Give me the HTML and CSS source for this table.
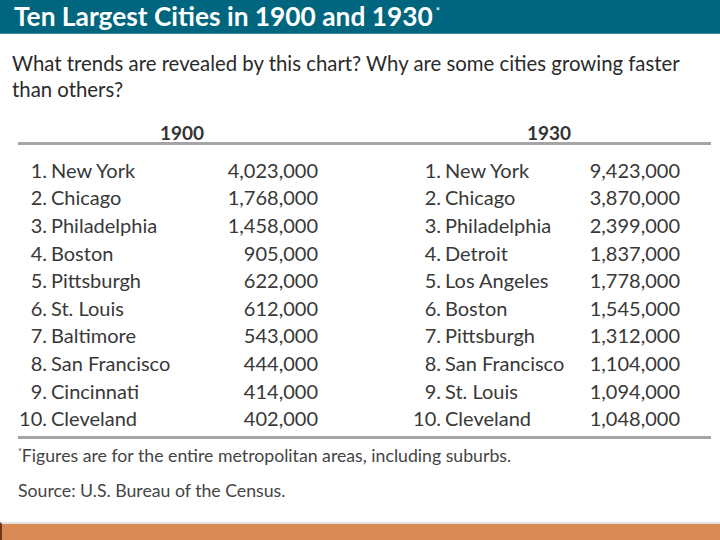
FILE: index.html
```html
<!DOCTYPE html>
<html>
<head>
<meta charset="utf-8">
<link rel="stylesheet" href="styles.css">
</head>
<body>
<div class="page">
  <header class="banner">
    <h1 class="title">Ten Largest Cities in 1900 and 1930<sup>*</sup></h1>
  </header>
  <p class="question">What trends are revealed by this chart? Why are some cities growing faster than others?</p>
  <section class="chart">
    <div class="years">
      <div class="year year-left">1900</div>
      <div class="year year-right">1930</div>
    </div>
    <div class="rule"></div>
    <div class="cols">
      <div class="block block-left">
        <span class="rank">1.</span><span class="city">New York</span><span class="pop">4,023,000</span>
        <span class="rank">2.</span><span class="city">Chicago</span><span class="pop">1,768,000</span>
        <span class="rank">3.</span><span class="city">Philadelphia</span><span class="pop">1,458,000</span>
        <span class="rank">4.</span><span class="city">Boston</span><span class="pop">905,000</span>
        <span class="rank">5.</span><span class="city">Pittsburgh</span><span class="pop">622,000</span>
        <span class="rank">6.</span><span class="city">St. Louis</span><span class="pop">612,000</span>
        <span class="rank">7.</span><span class="city">Baltimore</span><span class="pop">543,000</span>
        <span class="rank">8.</span><span class="city">San Francisco</span><span class="pop">444,000</span>
        <span class="rank">9.</span><span class="city">Cincinnati</span><span class="pop">414,000</span>
        <span class="rank">10.</span><span class="city">Cleveland</span><span class="pop">402,000</span>
      </div>
      <div class="block block-right">
        <span class="rank">1.</span><span class="city">New York</span><span class="pop">9,423,000</span>
        <span class="rank">2.</span><span class="city">Chicago</span><span class="pop">3,870,000</span>
        <span class="rank">3.</span><span class="city">Philadelphia</span><span class="pop">2,399,000</span>
        <span class="rank">4.</span><span class="city">Detroit</span><span class="pop">1,837,000</span>
        <span class="rank">5.</span><span class="city">Los Angeles</span><span class="pop">1,778,000</span>
        <span class="rank">6.</span><span class="city">Boston</span><span class="pop">1,545,000</span>
        <span class="rank">7.</span><span class="city">Pittsburgh</span><span class="pop">1,312,000</span>
        <span class="rank">8.</span><span class="city">San Francisco</span><span class="pop">1,104,000</span>
        <span class="rank">9.</span><span class="city">St. Louis</span><span class="pop">1,094,000</span>
        <span class="rank">10.</span><span class="city">Cleveland</span><span class="pop">1,048,000</span>
      </div>
    </div>
    <div class="rule rule-bottom"></div>
    <p class="note"><sup>*</sup>Figures are for the entire metropolitan areas, including suburbs.</p>
    <p class="source">Source: U.S. Bureau of the Census.</p>
  </section>
  <div class="spacer"></div>
  <footer class="footer"></footer>
</div>
</body>
</html>
```
FILE: styles.css
```css
html, body {
  margin: 0;
  padding: 0;
  background: #ffffff;
}
.page {
  width: 720px;
  height: 540px;
  display: flex;
  flex-direction: column;
  font-family: "Lato", "Open Sans", sans-serif;
  color: #2e2e2e;
  overflow: hidden;
}
.banner {
  height: 33px;
  background: #00667f;
  border-bottom: 1px solid #3f8aa0;
  display: flex;
  align-items: center;
  padding-left: 14px;
}
.title {
  margin: 0;
  color: #ffffff;
  font-size: 26.3px;
  font-weight: 700;
  line-height: 1;
}
.title sup {
  font-size: 10px;
  vertical-align: 12px;
  margin-left: 3px;
}
.question {
  margin: 16px 0 0 12px;
  width: 704px;
  font-size: 20.35px;
  line-height: 26px;
  color: #2a2a2a;
}
.chart {
  margin: 14px 0 0 18px;
  width: 693px;
}
.years {
  display: flex;
  height: 22px;
  margin-top: 6px;
  font-size: 19px;
  font-weight: 700;
  line-height: 22px;
  color: #333;
}
.year-left {
  width: 342px;
  padding-left: 142px;
  box-sizing: border-box;
}
.year-right {
  padding-left: 167px;
}
.rule {
  height: 3px;
  background: #a5a5a5;
  margin-top: -2px;
}
.cols {
  display: flex;
  margin-top: 11px;
}
.block {
  display: grid;
  grid-template-columns: 29px 1fr auto;
  grid-auto-rows: 27.6px;
  align-items: center;
  font-size: 20px;
  color: #383838;
  box-sizing: border-box;
}
.block-left {
  width: 342px;
  padding-right: 42px;
}
.block-right {
  width: 351px;
  padding-left: 52px;
  padding-right: 31px;
}
.rank {
  text-align: right;
}
.city {
  padding-left: 4px;
}
.pop {
  text-align: right;
}
.rule-bottom {
  margin-top: 4px;
}
.note {
  margin: 3px 0 0 0;
  font-size: 17.7px;
  line-height: 20px;
  color: #444;
}
.note sup {
  font-size: 9px;
  vertical-align: 7px;
}
.source {
  margin: 15px 0 0 0;
  font-size: 17.7px;
  line-height: 20px;
  color: #444;
}
.spacer {
  flex: 1;
}
.footer {
  height: 16px;
  background: #d98a55;
  border-top: 2px solid #e2e2e2;
  border-left: 2px solid #6a3a1f;
}
```
